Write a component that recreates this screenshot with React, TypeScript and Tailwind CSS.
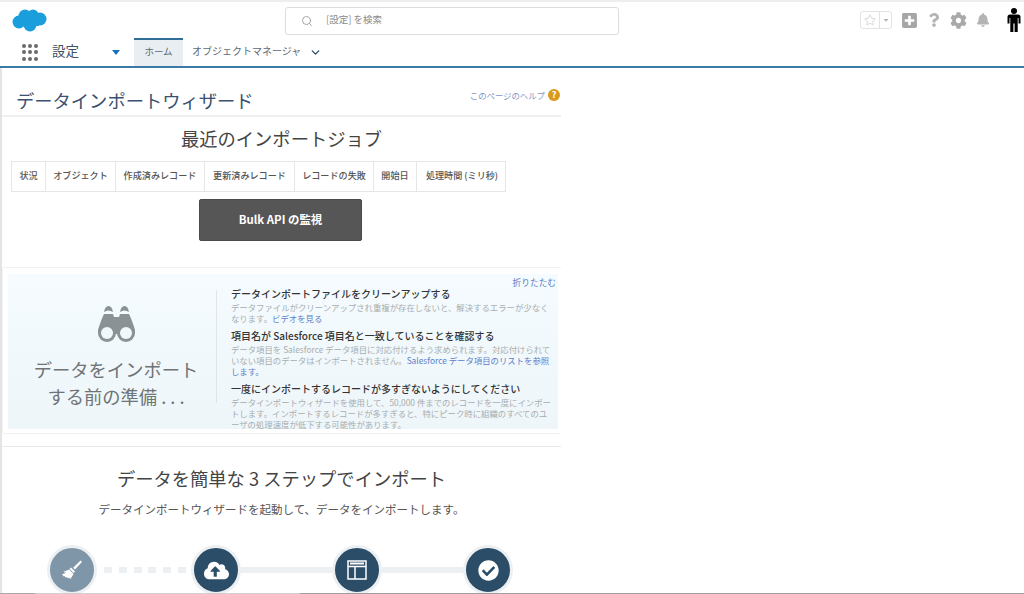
import { Search, ChevronDown } from "lucide-react";
import { FaCloudUploadAlt, FaCheckCircle, FaRegStar, FaPlusSquare, FaCog, FaBell, FaCaretDown, FaQuestion } from "react-icons/fa";

const columns = [
  { label: "状況", width: "w-[34px]" },
  { label: "オブジェクト", width: "w-[70px]" },
  { label: "作成済みレコード", width: "w-[89px]" },
  { label: "更新済みレコード", width: "w-[90px]" },
  { label: "レコードの失敗", width: "w-[79px]" },
  { label: "開始日", width: "w-[43px]" },
  { label: "処理時間 (ミリ秒)", width: "w-[90px]" },
];

function Cloud() {
  return (
    <svg width="36" height="24" viewBox="0 0 36 24" className="fill-[#1b9fdc]">
      <circle cx="8" cy="14" r="6.5" />
      <circle cx="14" cy="8" r="6.5" />
      <circle cx="22" cy="7" r="5.5" />
      <circle cx="29" cy="11" r="6.5" />
      <circle cx="19" cy="17" r="6.5" />
      <rect x="8" y="8" width="20" height="10" />
    </svg>
  );
}

function AppGrid() {
  return (
    <div className="grid grid-cols-3 gap-[2.5px] w-[16px]">
      {Array.from({ length: 9 }).map((_, i) => (
        <span key={i} className="w-[4px] h-[4px] rounded-full bg-[#6b6b6b]" />
      ))}
    </div>
  );
}

function Person() {
  return (
    <svg width="14" height="24" viewBox="0 0 14 24" className="fill-black">
      <circle cx="7" cy="3" r="3" />
      <path d="M3 6.5h8q2.5 0 2.5 2.5v6.5h-2V10h-.8v14H7.6v-8.5H6.4V24H3.3V10h-.8v5.5h-2V9q0-2.500 2.500-2.500z" />
    </svg>
  );
}

function Binoculars() {
  return (
    <svg width="39" height="38" viewBox="0 0 39 38" className="fill-[#8a9296]">
      <path d="M7 7Q8 1 11.500 1T16 7Q11.500 4 7 7zM23 7Q24 1 27.500 1T32 7Q27.500 4 23 7z" />
      <path d="M7 9H16L17 12H22L23 9H32Q35 15 38 25V29H1V25Q4 15 7 9z" />
      <circle cx="10" cy="28" r="9" />
      <circle cx="29" cy="28" r="9" />
      <circle cx="10" cy="28" r="6" className="fill-[#f1f8fb]" />
      <circle cx="29" cy="28" r="6" className="fill-[#f1f8fb]" />
    </svg>
  );
}

function Broom() {
  return (
    <svg width="24" height="24" viewBox="0 0 24 24" className="fill-white">
      <path d="M20.500 2.500l1.500 1.500-7 7.500-1.800-1.800z" />
      <path d="M11 9.500l4 4-1.500 1.500-4-4z" />
      <path d="M9 11.500l4.500 4.500-3 5-1.500-1.500-.8 1-1.400-1.600-.8.8-1.500-1.700-.8.4-1.700-2.400 2.500-.6 1.500-1.500-1.800.6-.5-.8z" />
    </svg>
  );
}

function Header() {
  return (
    <div className="border-t-2 border-[#eeeeee]">
      <div className="h-[36px] flex items-center pl-[11px] pr-[3px]">
        <Cloud />
        <div className="ml-[238px] mt-[1px] w-[334px] h-[28px] border border-[#dddddd] rounded-[3px] flex items-center pl-[15px] text-[#8a8a8a]">
          <Search size={12} strokeWidth={1.5} />
          <span className="ml-[13px] pb-[2px] text-[9.500px]">[設定] を検索</span>
        </div>
        <div className="ml-auto flex items-center text-[#b4b4b4]">
          <div className="w-[32px] h-[18px] border border-[#e3e3e3] rounded-[3px] flex items-center">
            <span className="w-[19px] flex justify-center border-r border-[#e3e3e3] h-full items-center text-[#dddddd]">
              <FaRegStar size={12} />
            </span>
            <span className="flex-1 flex justify-center">
              <FaCaretDown size={8} />
            </span>
          </div>
          <FaPlusSquare size={17} className="ml-[9px] text-[#a6a6a6]" />
          <FaQuestion size={14} className="ml-[9px]" />
          <FaCog size={17} className="ml-[9px] text-[#a9a9a9]" />
          <FaBell size={14} className="ml-[9px]" />
          <div className="ml-[17px]">
            <Person />
          </div>
        </div>
      </div>
      <div className="h-[28px] flex items-stretch">
        <div className="ml-[22px] flex items-center">
          <AppGrid />
        </div>
        <div className="ml-[14px] pb-[4px] flex items-center text-[13.500px] text-[#3d4f63]">設定</div>
        <div className="ml-[33px] flex items-center">
          <span className="w-0 h-0 border-l-[4.500px] border-r-[4.500px] border-t-[5px] border-l-transparent border-r-transparent border-t-[#1273c4]" />
        </div>
        <div className="ml-[14px] w-[49px] pb-[3px] bg-[#e8eef2] border-t-2 border-[#2f6f9a] flex items-center justify-center text-[9.500px] text-[#5c6670]">
          ホーム
        </div>
        <div className="ml-[9px] pb-[3px] flex items-center text-[10px] text-[#5c6a78]">オブジェクトマネージャ</div>
        <div className="ml-[8px] flex items-center text-[#2c4a68]">
          <ChevronDown size={13} strokeWidth={2.5} />
        </div>
      </div>
      <div className="h-[2px] bg-[#3a7aa6]" />
    </div>
  );
}

function Tip({ title, children, className }: { title: string; children: React.ReactNode; className?: string }) {
  return (
    <div className={className}>
      <p className="text-[10px] leading-[14px] font-medium text-[#333333] whitespace-nowrap">{title}</p>
      <p className="mt-[1px] text-[8.400px] leading-[11px] text-[#a8adb0]">{children}</p>
    </div>
  );
}

function PrepareCard() {
  return (
    <div className="mt-[26px] w-[561px] h-[167px] border border-[#f2f2f2] rounded-[2px] pt-[6px] pl-[5px] pr-[4px]">
      <div className="relative h-[155px] bg-gradient-to-b from-[#f5fbfe] to-[#eef6fa] flex overflow-hidden">
        <span className="absolute right-[2px] top-[3px] text-[8.700px] leading-[12px] text-[#5b80c9]">折りたたむ</span>
        <div className="w-[208px] pl-[8px] flex flex-col items-center pt-[31px] text-[#6f7375]">
          <Binoculars />
          <p className="mt-[13px] text-[18.300px] leading-[27px] text-center whitespace-nowrap">
            データをインポート
            <br />
            する前の準備 . . .
          </p>
        </div>
        <div className="mt-[16px] w-px h-[113px] bg-[#dfe5e8]" />
        <div className="ml-[14px] w-[324px] pt-[13px]">
          <Tip title="データインポートファイルをクリーンアップする">
            データファイルがクリーンアップされ重複が存在しないと、解決するエラーが少なくなります。
            <span className="text-[#5b80c9]">ビデオを見る</span>
          </Tip>
          <Tip className="mt-[5px]" title="項目名が Salesforce 項目名と一致していることを確認する">
            データ項目を Salesforce データ項目に対応付けるよう求められます。対応付けられていない項目のデータはインポートされません。
            <span className="text-[#5b80c9]">Salesforce データ項目のリストを参照します。</span>
          </Tip>
          <Tip className="mt-[5px]" title="一度にインポートするレコードが多すぎないようにしてください">
            データインポートウィザードを使用して、50,000 件までのレコードを一度にインポートします。インポートするレコードが多すぎると、特にピーク時に組織のすべてのユーザの処理速度が低下する可能性があります。
          </Tip>
        </div>
      </div>
    </div>
  );
}

function Circle({ faded, children }: { faded?: boolean; children: React.ReactNode }) {
  return (
    <div className={`w-[50px] h-[50px] shrink-0 rounded-full border-[3px] border-[#edf0f2] flex items-center justify-center text-white ${faded ? "bg-[#7f96a8]" : "bg-[#2b4d68]"}`}>
      {children}
    </div>
  );
}

function Steps() {
  return (
    <div className="mt-[28px] ml-[45px] flex items-center">
      <Circle faded>
        <Broom />
      </Circle>
      <div className="ml-[7px] mr-[5px] w-[82px] flex justify-between">
        {Array.from({ length: 6 }).map((_, i) => (
          <span key={i} className="w-[8px] h-[6px] bg-[#edf0f3]" />
        ))}
      </div>
      <Circle>
        <FaCloudUploadAlt size={25} />
      </Circle>
      <div className="w-[91px] h-[6px] bg-[#edf0f3]" />
      <Circle>
        <svg width="20" height="20" viewBox="0 0 20 20" fill="none" stroke="white" strokeWidth="1.5">
          <rect x="1" y="1" width="18" height="18" />
          <path d="M1 6.500h18M8 6.500V19" />
          <path d="M3 3.500h14" strokeWidth="2" />
        </svg>
      </Circle>
      <div className="w-[81px] h-[6px] bg-[#edf0f3]" />
      <Circle>
        <FaCheckCircle size={21} />
      </Circle>
    </div>
  );
}

export default function App() {
  return (
    <div className="h-[594px] flex flex-col overflow-hidden bg-white font-['Noto_Sans_CJK_JP','Liberation_Sans',sans-serif]">
      <Header />
      <div className="flex-1 min-h-0 w-[561px] border-l-2 border-[#e4e4e4] overflow-hidden">
        <div className="h-[49px] border-b-2 border-[#f0f0f0] pl-[14px] pr-[1px] flex justify-between">
          <h1 className="mt-[19px] text-[18.300px] leading-[26px] text-[#3b5170]">データインポートウィザード</h1>
          <div className="mt-[20px] h-[14px] flex items-center text-[8.400px] text-[#7f95c8]">
            このページのヘルプ
            <span className="ml-[3px] w-[12px] h-[12px] rounded-full bg-[#d99a1c] text-white text-[9px] font-bold flex items-center justify-center">?</span>
          </div>
        </div>
        <h2 className="mt-[8px] text-center text-[18.300px] leading-[26px] text-[#444444]">最近のインポートジョブ</h2>
        <div className="mt-[10px] ml-[9px] w-[495px] h-[31px] border border-[#e6e6e6] flex">
          {columns.map((c) => (
            <div key={c.label} className={`${c.width} shrink-0 pb-[2px] border-r border-[#e6e6e6] last:border-r-0 flex items-center justify-center text-[9.100px] font-medium text-[#555555] whitespace-nowrap`}>
              {c.label}
            </div>
          ))}
        </div>
        <button className="block mt-[7px] ml-[197px] w-[163px] h-[42px] bg-[#565656] border border-[#4a4a4a] rounded-[2px] text-white text-[11.400px] font-bold">
          Bulk API の監視
        </button>
        <PrepareCard />
        <div className="mt-[12px] h-px bg-[#e8e8e8]" />
        <h2 className="mt-[18px] text-center text-[18.300px] leading-[26px] text-[#444444]">データを簡単な 3 ステップでインポート</h2>
        <p className="mt-[10px] text-center text-[11.500px] leading-[16px] text-[#555555]">
          データインポートウィザードを起動して、データをインポートします。
        </p>
        <Steps />
      </div>
      <div className="h-px shrink-0 flex">
        <div className="w-[35px] bg-[#a8a8a8]" />
        <div className="w-[265px] bg-[#cfcfcf]" />
        <div className="flex-1 bg-[#9e9e9e]" />
      </div>
    </div>
  );
}
